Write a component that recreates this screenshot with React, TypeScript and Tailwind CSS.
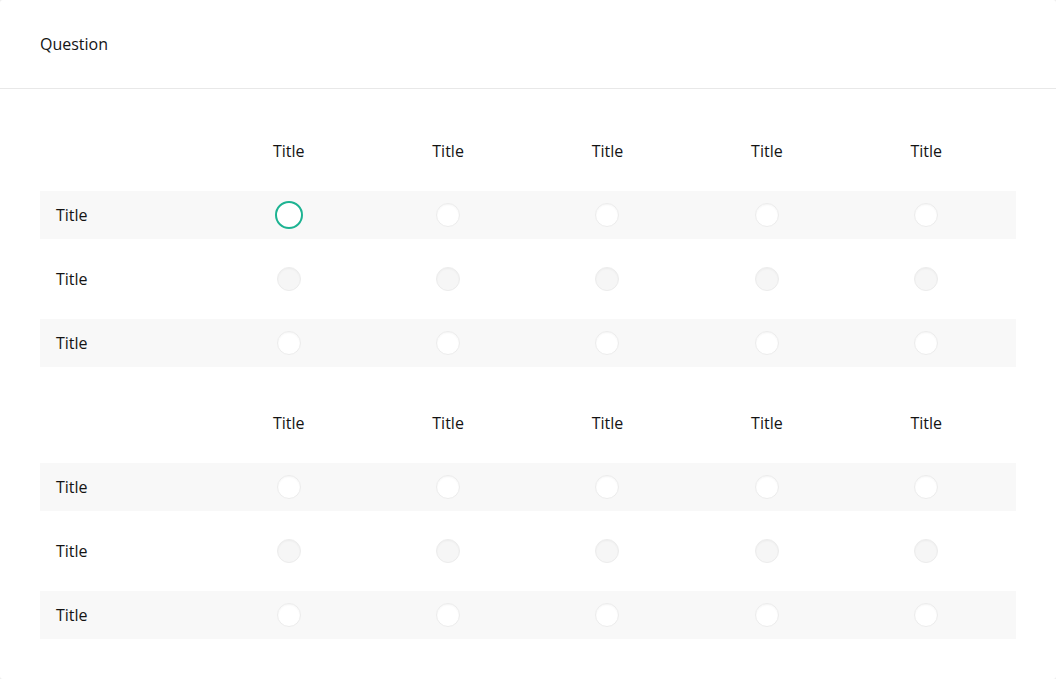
import React from "react";

const cols = ["Title", "Title", "Title", "Title", "Title"];

function Radio({ selected, onGray }: { selected?: boolean; onGray: boolean }) {
  if (selected) {
    return <div className="w-[28px] h-[28px] rounded-full border-2 border-[#1db392] bg-white" />;
  }
  return (
    <div
      className={`w-[24px] h-[24px] rounded-full border border-[#ececec] shadow-[inset_0_1px_2px_rgba(0,0,0,0.04)] ${
        onGray ? "bg-white" : "bg-[#f6f6f6]"
      }`}
    />
  );
}

function Matrix({ first }: { first?: boolean }) {
  const rows = [0, 1, 2];
  return (
    <div className="flex flex-col gap-4 py-4">
      <div className="grid grid-cols-[169px_repeat(5,1fr)] pr-[10px] h-[48px] items-center">
        <div />
        {cols.map((c, i) => (
          <div key={i} className="text-center text-[16px] font-medium text-[#141414]">
            {c}
          </div>
        ))}
      </div>
      {rows.map((r) => {
        const gray = r % 2 === 0;
        return (
          <div
            key={r}
            className={`grid grid-cols-[169px_repeat(5,1fr)] pr-[10px] h-[48px] items-center ${
              gray ? "bg-[#f8f8f8]" : "bg-white"
            }`}
          >
            <div className="pl-4 text-[16px] font-medium text-[#141414]">Title</div>
            {cols.map((_, i) => (
              <div key={i} className="flex justify-center items-center">
                <Radio selected={first && r === 0 && i === 0} onGray={gray} />
              </div>
            ))}
          </div>
        );
      })}
    </div>
  );
}

export default function App() {
  return (
    <div
      className="w-[1056px] h-[679px] bg-[#eeeeee] overflow-hidden"
      style={{ fontFamily: '"Open Sans", "Noto Sans", sans-serif' }}
    >
      <div className="w-full h-full bg-white rounded-[3px] flex flex-col">
        <div className="h-[89px] shrink-0 border-b border-[#e8e8e8] flex items-center px-10 text-[16px] font-medium text-[#141414]">
          Question
        </div>
        <div className="px-10 pt-[22px] pb-[24px] flex flex-col">
          <Matrix first />
          <Matrix />
        </div>
      </div>
    </div>
  );
}
